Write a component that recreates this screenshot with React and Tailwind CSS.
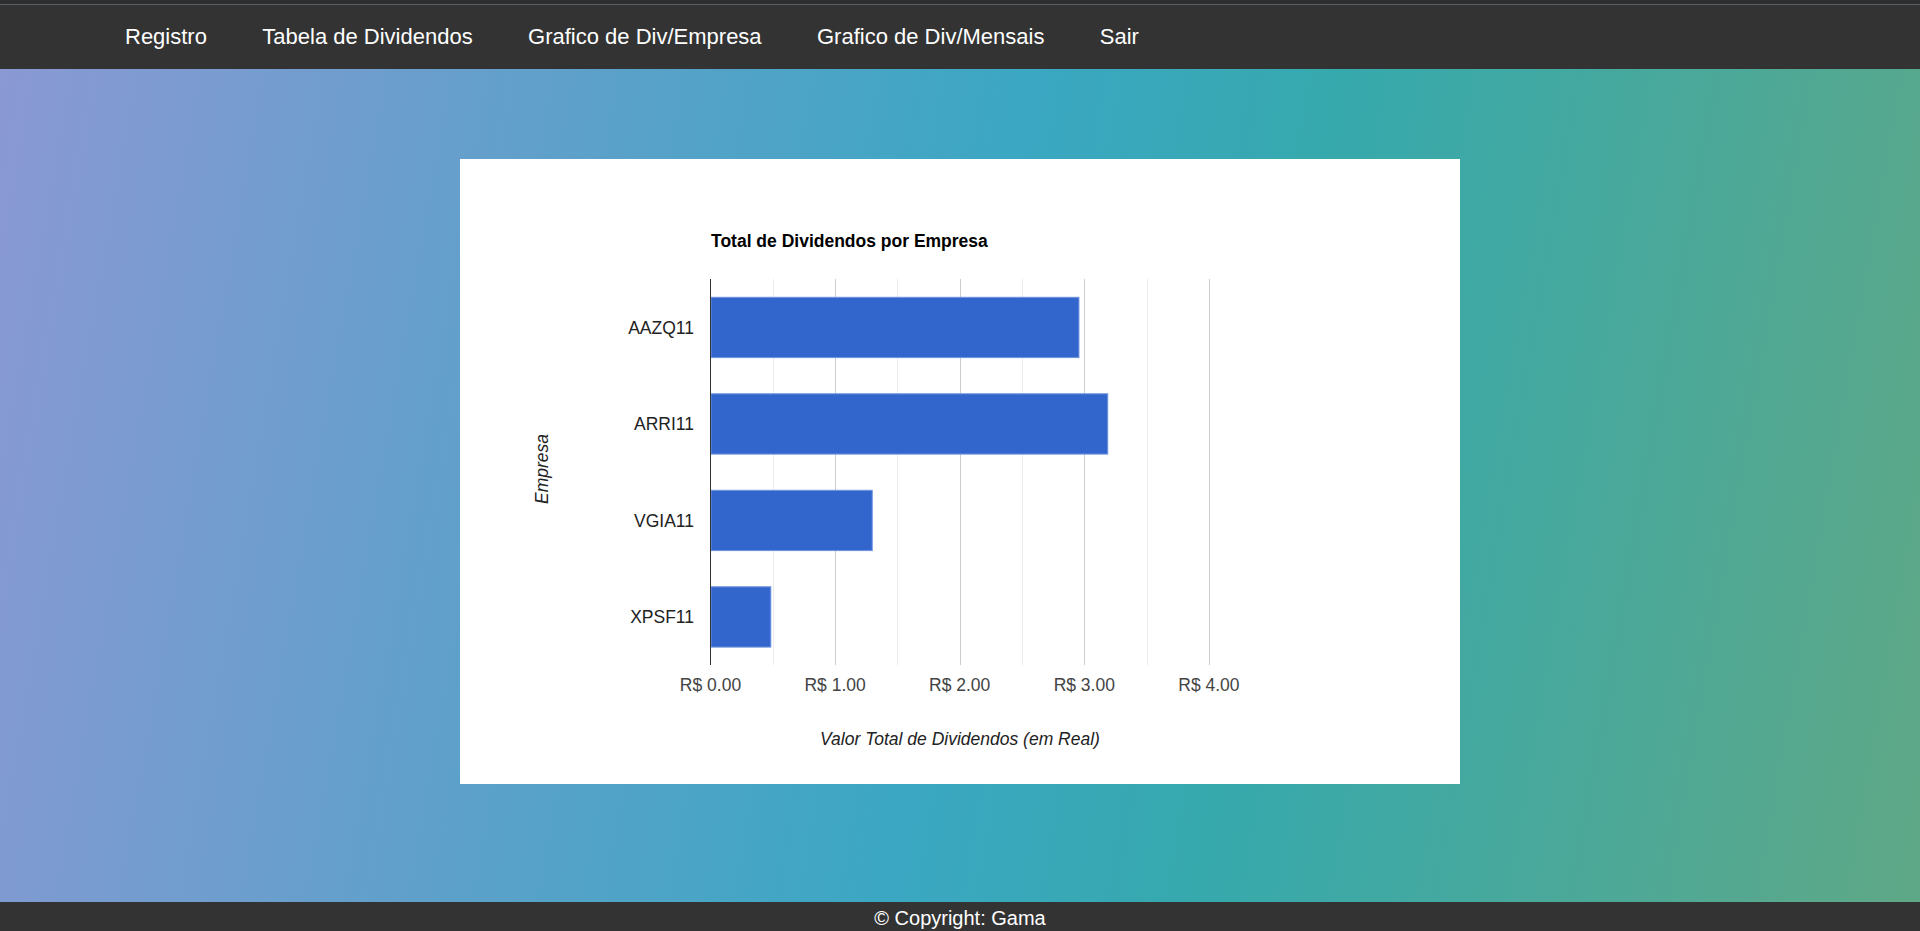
import React from "react";

const X0 = 250.5;
const S = 124.6;
const TOP = 120;
const BOTTOM = 506;
const BAND = 96.5;
const FS = 17.5;

const data = [
  { name: "AAZQ11", value: 2.957 },
  { name: "ARRI11", value: 3.188 },
  { name: "VGIA11", value: 1.298 },
  { name: "XPSF11", value: 0.484 },
];

function Chart() {
  const grid = [];
  for (let k = 1; k <= 8; k++) {
    const x = Math.round(X0 + (k * S) / 2) + 0.5;
    grid.push(
      <line
        key={k}
        x1={x}
        x2={x}
        y1={TOP}
        y2={BOTTOM}
        stroke={k % 2 === 0 ? "#cccccc" : "#ebebeb"}
        strokeWidth="1"
      />
    );
  }
  return (
    <svg
      width="1000"
      height="625"
      viewBox="0 0 1000 625"
      style={{ fontFamily: "'Liberation Sans', Arial, sans-serif" }}
    >
      <text x="251" y="88.3" fontSize={FS} fontWeight="bold" fill="#000000">
        Total de Dividendos por Empresa
      </text>
      {grid}
      {data.map((d, i) => {
        const y = TOP + 18.3 + BAND * i;
        return (
          <g key={d.name}>
            <rect
              x="251"
              y={y}
              width={d.value * S - 0.5}
              height="60.3"
              fill="#3366cc"
              stroke="#6e93df"
              strokeWidth="1"
            />
            <text
              x="234"
              y={y + 36.3}
              fontSize={FS}
              fill="#222222"
              textAnchor="end"
            >
              {d.name}
            </text>
          </g>
        );
      })}
      <line x1="250.5" x2="250.5" y1={TOP} y2={BOTTOM} stroke="#333333" strokeWidth="1" />
      {[0, 1, 2, 3, 4].map((k) => (
        <text
          key={k}
          x={X0 + k * S}
          y="531.7"
          fontSize={FS}
          fill="#444444"
          textAnchor="middle"
        >
          {`R$ ${k}.00`}
        </text>
      ))}
      <text
        x="500"
        y="586"
        fontSize={FS}
        fontStyle="italic"
        fill="#222222"
        textAnchor="middle"
      >
        Valor Total de Dividendos (em Real)
      </text>
      <text
        transform="translate(88,310) rotate(-90)"
        x="0"
        y="0"
        fontSize={FS}
        fontStyle="italic"
        fill="#222222"
        textAnchor="middle"
      >
        Empresa
      </text>
    </svg>
  );
}

export default function App() {
  const links = [
    "Registro",
    "Tabela de Dividendos",
    "Grafico de Div/Empresa",
    "Grafico de Div/Mensais",
    "Sair",
  ];
  return (
    <div className="min-h-screen flex flex-col font-['Liberation_Sans',Arial,sans-serif] bg-[linear-gradient(100deg,#8b98d4_0%,#3ba7c3_50%,#36a9ad_65%,#5fa886_100%)]">
      <div className="h-[4px] bg-[#2d2e30]" />
      <div className="h-px bg-[#5c5c5c]" />
      <nav className="h-[64px] bg-[#333333] flex items-center pl-[125px] gap-[55.4px] text-white text-[22px] leading-[22px]">
        {links.map((l) => (
          <a key={l} href="#" className="text-white">
            {l}
          </a>
        ))}
      </nav>
      <main className="flex-1 flex justify-center items-start pt-[90px]">
        <div className="w-[1000px] h-[625px] bg-white">
          <Chart />
        </div>
      </main>
      <footer className="h-[29px] bg-[#333333] text-white text-[20px] leading-[20px] text-center pt-[6px]">
        © Copyright: Gama
      </footer>
    </div>
  );
}
